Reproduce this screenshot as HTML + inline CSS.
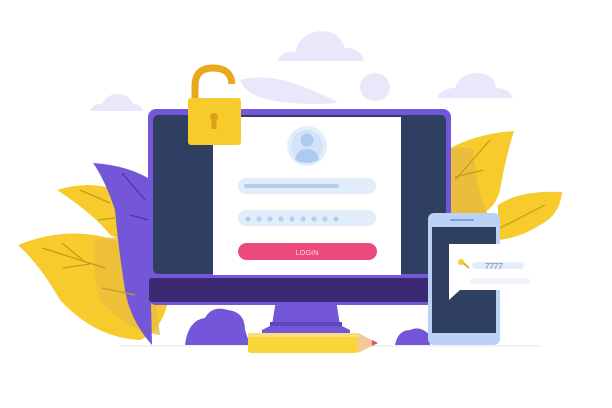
<!DOCTYPE html>
<html><head><meta charset="utf-8"><style>
html,body{margin:0;padding:0;background:#fff;width:612px;height:408px;overflow:hidden}
svg{display:block}
</style></head><body>
<svg width="612" height="408" viewBox="0 0 612 408" xmlns="http://www.w3.org/2000/svg">
<!-- clouds -->
<g fill="#ebe7fb">
<path d="M277 61 Q282 50 295 52 Q300 32 322 31 Q340 32 345 48 Q360 47 364 61 Z"/>
<path d="M90 111 Q94 103 102 104 Q108 93 120 94 Q130 96 133 104 Q142 104 143 111 Z"/>
<path d="M437 98 Q442 88 455 88 Q460 72 480 73 Q495 75 496 88 Q510 88 513 98 Z"/>
<path d="M240 80 Q260 74 290 82 Q320 92 338 103 Q300 106 270 100 Q245 95 240 80 Z"/>
<ellipse cx="375" cy="87" rx="15" ry="14"/>
</g>
<!-- ground line -->
<rect x="120" y="345" width="420" height="1.5" fill="#eeeef3"/>
<!-- left leaves -->
<path d="M18 245 Q60 228 100 236 Q150 248 170 290 Q165 330 140 340 Q95 338 60 300 Q40 265 18 245 Z" fill="#f8cb2c"/>
<path d="M57 190 Q90 180 115 190 Q140 205 150 230 Q130 245 110 235 Q95 215 57 190 Z" fill="#f8cb2c"/>
<path d="M95 240 Q120 232 150 250 L160 335 Q125 330 100 300 Q92 270 95 240 Z" fill="#eabd3c" opacity="0.8"/>
<path d="M93 163 Q125 165 148 178 L152 345 Q130 320 125 290 Q118 245 115 210 Q105 180 93 163 Z" fill="#7357d8"/>
<g stroke="#c69a1c" stroke-width="1.3" fill="none">
<path d="M42 248 L105 268"/><path d="M62 243 L85 262"/><path d="M63 268 L90 264"/><path d="M102 288 L135 295"/>
<path d="M80 190 L110 203"/><path d="M98 220 L115 218"/>
</g>
<g stroke="#4d36a8" stroke-width="1.3" fill="none"><path d="M122 173 L145 200"/><path d="M130 215 L148 220"/></g>
<!-- right leaves -->
<path d="M450 148 Q480 133 514 131 Q505 160 500 190 Q495 210 478 215 L450 215 Z" fill="#f8cb2c"/>
<path d="M450 150 Q465 145 473 150 Q475 185 488 215 L450 215 Z" fill="#eabd3c"/>
<path d="M498 205 Q520 190 562 192 Q560 215 540 225 Q520 238 498 240 Z" fill="#f8cb2c"/>
<g stroke="#c69a1c" stroke-width="1.2" fill="none"><path d="M455 180 L490 140"/><path d="M455 177 L483 170"/><path d="M500 228 L545 205"/></g>
<!-- bushes -->
<path d="M185 345 Q188 320 205 318 Q212 305 228 310 Q245 312 245 330 L250 345 Z" fill="#7357d8"/>
<path d="M395 345 Q398 330 410 330 Q420 325 430 335 L430 345 Z" fill="#7357d8"/>
<!-- stand -->
<path d="M276 300 L336 300 L340 325 L350 330 L350 345 L262 345 L262 330 L272 325 Z" fill="#7357d8"/>
<rect x="270" y="322" width="72" height="4" fill="#5f45bf"/>
<!-- monitor -->
<rect x="148" y="109" width="303" height="196" rx="8" fill="#7357d8"/>
<rect x="153" y="115" width="293" height="159" rx="5" fill="#2f3f62"/>
<rect x="149" y="278" width="300" height="24" rx="3" fill="#3b2a72"/>
<rect x="213" y="117" width="188" height="158" fill="#fff"/>
<!-- avatar -->
<circle cx="307" cy="146" r="20" fill="#e4eefb"/>
<circle cx="307" cy="146" r="16" fill="#d3e4f8"/>
<circle cx="307" cy="140" r="6.5" fill="#aecbef"/>
<path d="M295 160 Q297 149 307 149 Q317 149 319 160 Q307 166 295 160 Z" fill="#aecbef"/>
<rect x="238" y="178" width="138" height="16" rx="8" fill="#e1edf9"/>
<rect x="244" y="184" width="95" height="4" rx="2" fill="#b6cdee"/>
<rect x="238" y="210" width="138" height="16" rx="8" fill="#e1edf9"/>
<g fill="#b6cdee">
<circle cx="248" cy="219" r="2.6"/><circle cx="259" cy="219" r="2.6"/><circle cx="270" cy="219" r="2.6"/><circle cx="281" cy="219" r="2.6"/><circle cx="292" cy="219" r="2.6"/><circle cx="303" cy="219" r="2.6"/><circle cx="314" cy="219" r="2.6"/><circle cx="325" cy="219" r="2.6"/><circle cx="336" cy="219" r="2.6"/>
</g>
<rect x="238" y="243" width="139" height="17" rx="8.5" fill="#ec4a7a"/>
<text x="307" y="255" text-anchor="middle" font-family="Liberation Sans, sans-serif" font-size="7.5" fill="#fbd6e2">LOGIN</text>
<!-- lock -->
<path d="M195 100 L195 86 Q195 68 213 68 Q231 68 232 84" stroke="#e8a91c" stroke-width="7" fill="none"/>
<rect x="188" y="98" width="53" height="47" rx="3" fill="#f8cb2c"/>
<circle cx="214" cy="117" r="4" fill="#d9a21a"/>
<rect x="211.5" y="118" width="5" height="11" rx="1" fill="#d9a21a"/>
<!-- pencil -->
<rect x="248" y="333" width="110" height="20" rx="3" fill="#f8d53a"/>
<rect x="248" y="333" width="110" height="4" fill="#f5e07c"/>
<path d="M358 333 L378 343 L358 353 Z" fill="#f3c99a"/>
<path d="M372 340 L378 343 L372 346 Z" fill="#e6477a"/>
<!-- phone -->
<rect x="428" y="213" width="72" height="132" rx="6" fill="#b9d2f5"/>
<rect x="432" y="227" width="64" height="106" fill="#2f3f62"/>
<rect x="450" y="219" width="24" height="2" rx="1" fill="#7e9fdc"/>
<path d="M449 244 L535 244 L535 290 L460 290 L449 300 Z" fill="#fff"/>
<path d="M461 261 L469 268" stroke="#e8a91c" stroke-width="2"/>
<circle cx="461" cy="262" r="3" fill="#f8cb2c"/>
<rect x="472" y="262" width="52" height="7" rx="3.5" fill="#e4edfa"/>
<text x="485" y="269" font-family="Liberation Sans, sans-serif" font-size="8" font-style="italic" font-weight="bold" fill="#8da6d8">7777</text>
<rect x="470" y="278" width="60" height="6" rx="3" fill="#f2f4fb"/>
</svg>
</body></html>
